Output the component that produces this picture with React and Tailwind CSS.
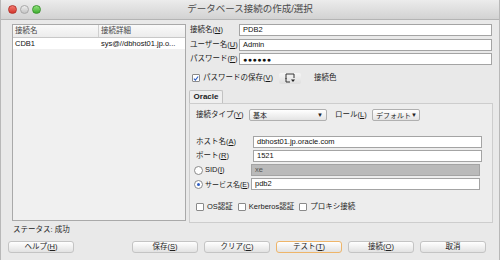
import React from 'react';

const font = { fontFamily: '"Liberation Sans", "Noto Sans CJK JP", sans-serif' };

function Mn({ text, k }) {
  // label with underlined mnemonic letter, e.g. 接続名(N)
  return (
    <span>
      {text}(<u>{k}</u>)
    </span>
  );
}

function Field({ value, gray, className = '' }) {
  return (
    <div
      className={`h-[12px] border border-[#a4a4a4] flex items-center pl-[3px] text-[7.5px] leading-none ${
        gray ? 'bg-[#bababa] text-[#555]' : 'bg-white text-[#111]'
      } ${className}`}
    >
      {value}
    </div>
  );
}

function Check({ checked }) {
  return (
    <div className="w-[8px] h-[8px] border border-[#8a8a8a] bg-white rounded-[1px] flex items-center justify-center shrink-0">
      {checked && (
        <svg width="7" height="7" viewBox="0 0 7 7">
          <path d="M1 3.6 L2.8 5.4 L6 1.2" fill="none" stroke="#2f5fc4" strokeWidth="1.3" />
        </svg>
      )}
    </div>
  );
}

function Radio({ checked }) {
  return (
    <div className="w-[9px] h-[9px] border border-[#8a8a8a] bg-white rounded-full flex items-center justify-center shrink-0">
      {checked && <div className="w-[3px] h-[3px] rounded-full bg-[#2f5fc4]" />}
    </div>
  );
}

function Select({ value, className = '' }) {
  return (
    <div
      className={`h-[12px] border border-[#b0b0b0] rounded-[2px] bg-gradient-to-b from-white to-[#e4e4e4] flex items-center justify-between px-[3px] text-[7px] leading-none text-[#222] whitespace-nowrap ${className}`}
    >
      <span>{value}</span>
      <span className="text-[6px]">▼</span>
    </div>
  );
}

function Button({ children, focused }) {
  return (
    <div
      className={`w-[66px] h-[12px] rounded-[3px] border bg-gradient-to-b from-white to-[#e2e2e2] flex items-center justify-center text-[7.5px] leading-none text-[#222] ${
        focused ? 'border-[#eeb56a]' : 'border-[#c4c4c4]'
      }`}
    >
      {children}
    </div>
  );
}

const label = 'text-[7.5px] text-[#1a1a1a] whitespace-nowrap leading-none';

export default function App() {
  return (
    <div style={font} className="w-[500px] h-[260px] bg-[#e9e9e9] flex flex-col overflow-hidden border-x border-[#b8b8b8]">
      {/* title bar */}
      <div className="h-[20px] shrink-0 relative flex items-center justify-center bg-gradient-to-b from-[#ececec] to-[#d2d2d2] border-b border-[#b4b4b4]">
        <div className="absolute left-[7px] top-[5px] flex gap-[3px]">
          <div className="w-[9px] h-[9px] rounded-full bg-gradient-to-b from-[#f2786f] to-[#d3322a] border border-[#b5352d]" />
          <div className="w-[9px] h-[9px] rounded-full bg-gradient-to-b from-[#eeeeee] to-[#c4c4c4] border border-[#a8a8a8]" />
          <div className="w-[9px] h-[9px] rounded-full bg-gradient-to-b from-[#8fe27a] to-[#3cae2c] border border-[#3b9530]" />
        </div>
        <span className="text-[9.5px] text-[#4a4a4a]">データベース接続の作成/選択</span>
      </div>

      {/* main */}
      <div className="h-[203px] shrink-0 flex">
        {/* connection table */}
        <div className="pl-[11px] pt-[4px]">
          <div className="w-[174px] h-[197px] border border-[#a9a9a9] bg-[#f0f0f0] flex flex-col">
            <div className="h-[13px] flex bg-gradient-to-b from-[#fafafa] to-[#ececec] border-b border-[#c8c8c8] text-[7.5px] text-[#444] leading-none">
              <div className="w-[86px] border-r border-[#cfcfcf] flex items-center pl-[2px]">接続名</div>
              <div className="flex-1 flex items-center pl-[2px]">接続詳細</div>
            </div>
            <div className="h-[11px] flex bg-white text-[7.5px] text-[#111] leading-none">
              <div className="w-[86px] flex items-center pl-[2px]">CDB1</div>
              <div className="flex-1 flex items-center pl-[2px] whitespace-nowrap">sys@//dbhost01.jp.o...</div>
            </div>
          </div>
        </div>

        {/* form */}
        <div className="ml-[3px] pt-[4px] w-[304px] flex flex-col">
          <div className="flex items-center h-[12px]">
            <div className={`w-[50px] pl-[1px] ${label}`}><Mn text="接続名" k="N" /></div>
            <Field value="PDB2" className="w-[253px]" />
          </div>
          <div className="flex items-center h-[12px] mt-[2.5px]">
            <div className={`w-[50px] pl-[1px] ${label}`}><Mn text="ユーザー名" k="U" /></div>
            <Field value="Admin" className="w-[253px]" />
          </div>
          <div className="flex items-center h-[12px] mt-[2.5px]">
            <div className={`w-[50px] pl-[1px] ${label}`}><Mn text="パスワード" k="P" /></div>
            <Field value={<span className="text-[7px] tracking-[0.5px]">●●●●●●</span>} className="w-[253px]" />
          </div>

          <div className="flex items-center h-[12px] mt-[7px] pl-[3px]">
            <Check checked />
            <span className={`ml-[3px] ${label}`}><Mn text="パスワードの保存" k="V" /></span>
            <div className="ml-[6px] w-[22px] h-[11px] rounded-[2px] bg-gradient-to-b from-[#f6f6f6] to-[#dedede] flex items-center justify-center">
              <svg width="12" height="10" viewBox="0 0 12 10">
                <path d="M2 6 V1 H10 V5" fill="none" stroke="#333" strokeWidth="1" />
                <path d="M2 5 V9 H6" fill="none" stroke="#333" strokeWidth="1" />
                <path d="M7 6.5 H11 L9 9 Z" fill="#222" />
              </svg>
            </div>
            <span className={`ml-[13px] ${label}`}>接続色</span>
          </div>

          {/* tab */}
          <div className="mt-[6px] flex">
            <div className="w-[34px] h-[13px] border border-b-0 border-[#c2c2c2] bg-[#efefef] rounded-t-[2px] flex items-center justify-center text-[8px] font-bold text-[#222]">
              Oracle
            </div>
          </div>
          <div className="w-[304px] h-[120px] border border-[#cdcdcd] bg-[#ededed] flex flex-col pl-[6px] pt-[5px]">
            <div className="flex items-center h-[12px]">
              <div className={`w-[53px] ${label}`}><Mn text="接続タイプ" k="Y" /></div>
              <Select value="基本" className="w-[78px]" />
              <div className={`ml-[8px] w-[37px] ${label}`}><Mn text="ロール" k="L" /></div>
              <Select value="デフォルト" className="w-[48px]" />
            </div>

            <div className="flex items-center h-[12px] mt-[15px]">
              <div className={`w-[57px] ${label}`}><Mn text="ホスト名" k="A" /></div>
              <Field value="dbhost01.jp.oracle.com" className="w-[229px]" />
            </div>
            <div className="flex items-center h-[12px] mt-[2px]">
              <div className={`w-[57px] ${label}`}><Mn text="ポート" k="R" /></div>
              <Field value="1521" className="w-[229px]" />
            </div>
            <div className="flex items-center h-[12px] mt-[2px]">
              <div className="w-[57px] flex items-center -ml-[2px]">
                <Radio />
                <span className={`ml-[2px] ${label}`}><Mn text="SID" k="I" /></span>
              </div>
              <Field value="xe" gray className="w-[229px]" />
            </div>
            <div className="flex items-center h-[12px] mt-[2px]">
              <div className="w-[57px] flex items-center -ml-[2px]">
                <Radio checked />
                <span className="ml-[2px] text-[7px] text-[#1a1a1a] whitespace-nowrap leading-none"><Mn text="サービス名" k="E" /></span>
              </div>
              <Field value="pdb2" className="w-[229px]" />
            </div>

            <div className={`flex items-center h-[10px] mt-[12px] ${label}`}>
              <Check />
              <span className="ml-[3px]">OS認証</span>
              <div className="ml-[5px]"><Check /></div>
              <span className="ml-[3px]">Kerberos認証</span>
              <div className="ml-[5px]"><Check /></div>
              <span className="ml-[3px]">プロキシ接続</span>
            </div>
          </div>
        </div>
      </div>

      {/* status */}
      <div className="h-[14px] shrink-0 flex items-center pl-[12px] text-[7.5px] text-[#1a1a1a]">
        ステータス: 成功
      </div>

      {/* buttons */}
      <div className="mt-[4px] flex pl-[7px]">
        <Button><Mn text="ヘルプ" k="H" /></Button>
        <div className="ml-[58px] flex gap-[6px]">
          <Button><Mn text="保存" k="S" /></Button>
          <Button><Mn text="クリア" k="C" /></Button>
          <Button focused><Mn text="テスト" k="T" /></Button>
          <Button><Mn text="接続" k="O" /></Button>
          <Button>取消</Button>
        </div>
      </div>
    </div>
  );
}
